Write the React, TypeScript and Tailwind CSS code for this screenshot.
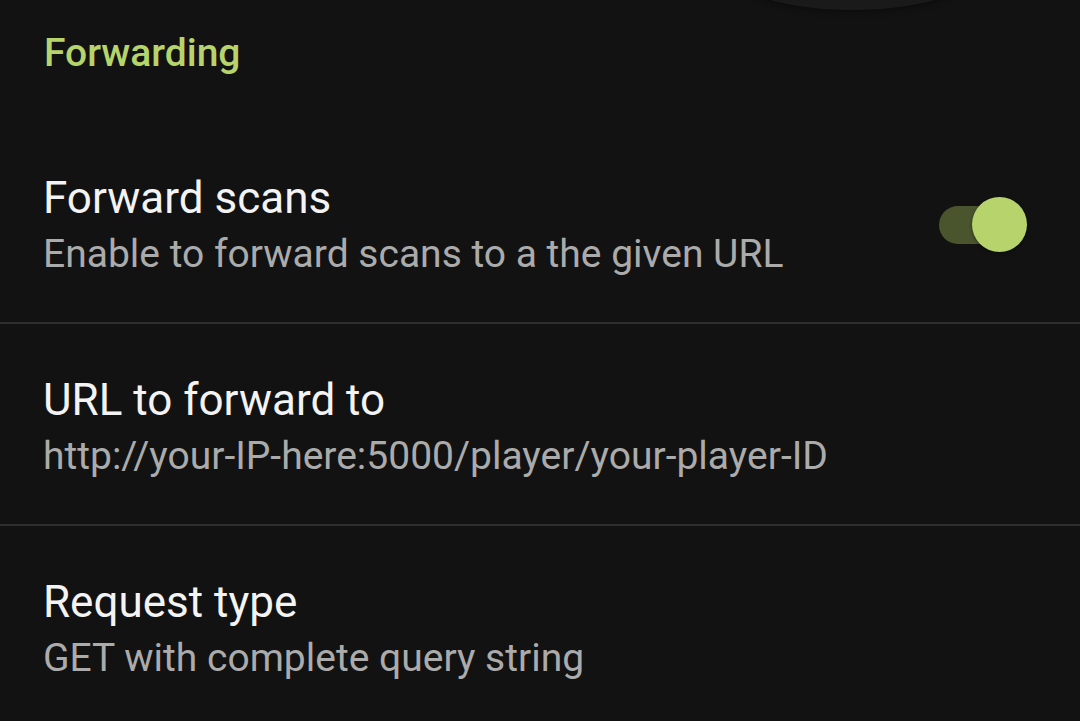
import React from "react";

interface PrefRowProps {
  title: string;
  summary: string;
  checked?: boolean;
  last?: boolean;
}

function Toggle({ checked }: { checked: boolean }) {
  return (
    <div className="relative w-[88px] h-[55px] shrink-0">
      <div
        className={`absolute left-0 top-[9px] w-[72px] h-[38px] rounded-full ${
          checked ? "bg-[#4a552e]" : "bg-[#5a5a5a]"
        }`}
      />
      <div
        className={`absolute top-0 w-[55px] h-[55px] rounded-full shadow-[0_1px_3px_rgba(0,0,0,0.5)] ${
          checked ? "right-0 bg-[#b6d46b]" : "left-0 bg-[#e0e0e0]"
        }`}
      />
    </div>
  );
}

function PrefRow({ title, summary, checked, last }: PrefRowProps) {
  return (
    <div className={last ? "" : "border-b-2 border-[#2e2e2e]"}>
      <div className="flex items-center pl-[43px] pr-[53px] pt-[46px] pb-[42px]">
        <div className="flex flex-col flex-1 min-w-0">
          <span className="text-[44px] leading-[60px] text-[#f3f3f3] whitespace-nowrap">{title}</span>
          <span className="text-[39px] leading-[52px] text-[#ababab] whitespace-nowrap">{summary}</span>
        </div>
        {checked !== undefined && <Toggle checked={checked} />}
      </div>
    </div>
  );
}

export default function App() {
  return (
    <div
      className="relative w-[1080px] h-[721px] overflow-hidden bg-[#121212]"
      style={{ fontFamily: "Roboto, 'Noto Sans', sans-serif" }}
    >
      {/* edge of the floating panel above, scrolled off */}
      <div className="absolute left-[735px] top-[-60px] w-[235px] h-[70px] rounded-[50%] bg-[#1a1a1a] shadow-[0_2px_6px_rgba(0,0,0,0.35)]" />

      <div className="relative">
        <div className="pl-[44px] pt-[30px] pb-[46px]">
          <span className="text-[39px] leading-[46px] font-medium text-[#b6d46b]">Forwarding</span>
        </div>
        <PrefRow
          title="Forward scans"
          summary="Enable to forward scans to a the given URL"
          checked={true}
        />
        <PrefRow
          title="URL to forward to"
          summary="http://your-IP-here:5000/player/your-player-ID"
        />
        <PrefRow
          title="Request type"
          summary="GET with complete query string"
          last
        />
      </div>
    </div>
  );
}
